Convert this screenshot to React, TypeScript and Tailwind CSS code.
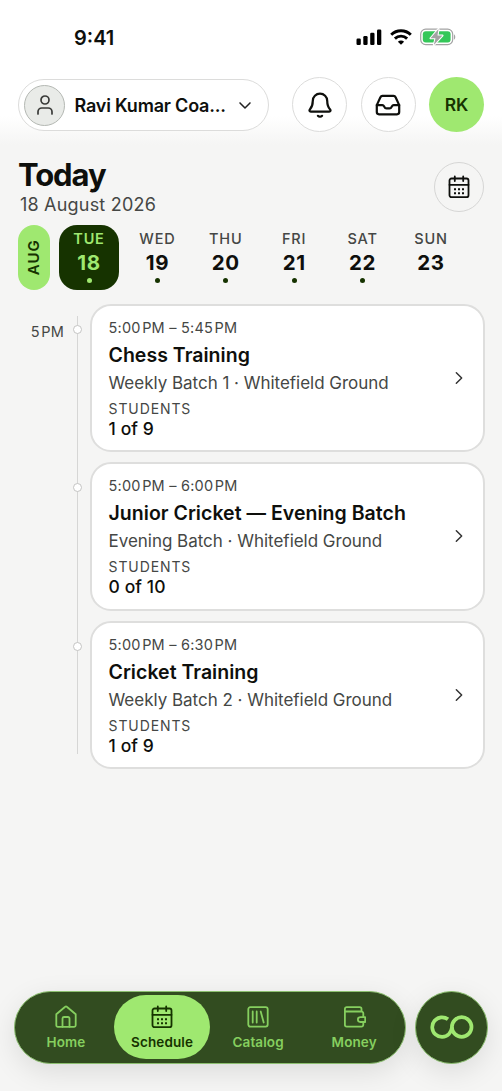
import type { ReactNode } from 'react'

const days = [
  { day: 'TUE', date: 18, dot: true, active: true },
  { day: 'WED', date: 19, dot: true },
  { day: 'THU', date: 20, dot: true },
  { day: 'FRI', date: 21, dot: true },
  { day: 'SAT', date: 22, dot: true },
  { day: 'SUN', date: 23, dot: false },
]

const sessions = [
  {
    time: '5:00\u200aPM – 5:45\u200aPM',
    title: 'Chess Training',
    place: 'Weekly Batch 1 · Whitefield Ground',
    students: '1 of 9',
  },
  {
    time: '5:00\u200aPM – 6:00\u200aPM',
    title: 'Junior Cricket — Evening Batch',
    place: 'Evening Batch · Whitefield Ground',
    students: '0 of 10',
  },
  {
    time: '5:00\u200aPM – 6:30\u200aPM',
    title: 'Cricket Training',
    place: 'Weekly Batch 2 · Whitefield Ground',
    students: '1 of 9',
  },
]

function Icon({ className, width = 1.8, children }: { className: string; width?: number; children: ReactNode }) {
  return (
    <svg
      className={className}
      viewBox="0 0 24 24"
      fill="none"
      stroke="currentColor"
      strokeWidth={width}
      strokeLinecap="round"
      strokeLinejoin="round"
    >
      {children}
    </svg>
  )
}

function CalendarIcon({ className, width }: { className: string; width?: number }) {
  return (
    <Icon className={className} width={width}>
      <rect x="2.5" y="3.5" width="19" height="18.7" rx="2" />
      <path d="M2.5 9.8h19M7.8 1.5v4.5M16.2 1.5v4.5" />
      <path
        d="M8 14.2h.01M12 14.2h.01M16 14.2h.01M8 18.2h.01M12 18.2h.01M16 18.2h.01"
        strokeWidth="2"
        strokeLinecap="square"
      />
    </Icon>
  )
}

function HomeIcon({ className }: { className: string }) {
  return (
    <Icon className={className}>
      <path d="M2.3 9.2 11.2 1.7a1.2 1.2 0 0 1 1.6 0L21.7 9.2V20.3a1.5 1.5 0 0 1-1.5 1.5H3.8a1.5 1.5 0 0 1-1.5-1.5z" />
      <path d="M8.5 21.8V13.5A1.5 1.5 0 0 1 10 12h4a1.5 1.5 0 0 1 1.5 1.5v8.3" />
    </Icon>
  )
}

function CatalogIcon({ className }: { className: string }) {
  return (
    <Icon className={className}>
      <rect x="2.3" y="2.2" width="19.4" height="19.4" rx="2" />
      <path d="M6.7 6.5v11M10.7 6.5v11M14.7 6.5l3 11" />
    </Icon>
  )
}

function WalletIcon({ className }: { className: string }) {
  return (
    <Icon className={className}>
      <path d="M19.5 6.5V4a1.8 1.8 0 0 0-1.8-1.8H4.7A1.8 1.8 0 0 0 2.9 4v15.8a1.8 1.8 0 0 0 1.8 1.8h14.8a1.8 1.8 0 0 0 1.8-1.8V17M21.3 12.2V8.3a1.8 1.8 0 0 0-1.8-1.8H2.9" />
      <path d="M23.2 12.2h-4.9a2.4 2.4 0 0 0 0 4.8h4.9z" />
    </Icon>
  )
}

const tabs = [
  { label: 'Home', icon: HomeIcon },
  { label: 'Schedule', icon: CalendarIcon, active: true },
  { label: 'Catalog', icon: CatalogIcon },
  { label: 'Money', icon: WalletIcon },
]

function StatusBar() {
  return (
    <div className="flex h-[74px] items-center justify-between pl-[74px] pr-[46px]">
      <span className="pt-px text-[20px] font-semibold">9:41</span>
      <div className="flex items-center gap-2">
        <svg className="h-4 w-[26px]" viewBox="0 0 26 16">
          <rect x="0.5" y="9.5" width="4.3" height="6.5" rx="1.2" />
          <rect x="7.3" y="7" width="4.3" height="9" rx="1.2" />
          <rect x="14.2" y="3.8" width="4.3" height="12.2" rx="1.2" />
          <rect x="21" y="0.5" width="4.3" height="15.5" rx="1.2" />
        </svg>
        <svg className="h-4 w-[22px]" viewBox="0 0 22 16" fill="none" stroke="#000" strokeWidth="2.9">
          <path d="M1.2 5.8a13.9 13.9 0 0 1 19.6 0" />
          <path d="M4.9 9.6a8.7 8.7 0 0 1 12.2 0" />
          <path d="M11 15.8 7.9 12.7a4.4 4.4 0 0 1 6.2 0z" fill="#000" stroke="none" />
        </svg>
        <svg className="h-[18px] w-9" viewBox="0 0 36 18">
          <rect x="0.7" y="1.2" width="32" height="15.4" rx="5" fill="#fff" stroke="#a3a3a3" strokeWidth="1.2" />
          <rect x="2.8" y="3.3" width="27.8" height="11.2" rx="3" fill="#34c759" />
          <path d="M34 6.5c1.7.6 1.7 4.4 0 5z" fill="#a3a3a3" />
          <path
            d="M18.5 1 10.5 10.3h5L13.8 17l8.7-9.5h-5z"
            fill="#a3a3a3"
            stroke="#fff"
            strokeWidth="2"
            paintOrder="stroke"
            strokeLinejoin="round"
          />
        </svg>
      </div>
    </div>
  )
}

function Header() {
  return (
    <header className="flex h-[62px] items-center px-[18px]">
      <button className="flex h-[52px] w-[251px] items-center rounded-full border border-[#dcdcdb] bg-white pl-[5px]">
        <span className="flex size-[41px] shrink-0 items-center justify-center rounded-full border border-[#b4b8b3] bg-[#e9ebe8]">
          <Icon className="size-6 text-[#3a3b39]" width={1.7}>
            <circle cx="12" cy="7" r="4" />
            <path d="M5 21v-2.2A3.8 3.8 0 0 1 8.8 15h6.4a3.8 3.8 0 0 1 3.8 3.8V21" />
          </Icon>
        </span>
        <span className="ml-[9.5px] whitespace-nowrap text-[18px] font-semibold tracking-[-0.2px]">Ravi Kumar Coa...</span>
        <Icon className="ml-auto mr-[13px] size-5 text-[#222]" width={1.8}>
          <path d="m6 9.5 6 6 6-6" />
        </Icon>
      </button>
      <div className="mb-px ml-auto flex gap-[13.5px]">
        <button className="flex size-[55px] items-center justify-center rounded-full border border-[#dcdcdb] bg-white">
          <Icon className="size-7" width={1.9}>
            <path d="M12 2.3a6.2 6.2 0 0 0-6.2 6.2c0 3.7-.6 5.3-2.5 7.3-.7.8-.3 1.9.8 1.9h15.8c1.1 0 1.5-1.1.8-1.9-1.9-2-2.5-3.6-2.5-7.3A6.2 6.2 0 0 0 12 2.3z" />
            <path d="M10.2 21.3c.9 1 2.7 1 3.6 0" />
          </Icon>
        </button>
        <button className="flex size-[55px] items-center justify-center rounded-full border border-[#dcdcdb] bg-white">
          <Icon className="size-7" width={1.9}>
            <path d="M2.4 12.1h4.8c1 0 1.2.6 1.7 1.5.4.9.9 1.3 1.8 1.3h2.6c.9 0 1.4-.4 1.8-1.3.5-.9.7-1.5 1.7-1.5h4.8" />
            <path d="M2.4 12.1v6a1.9 1.9 0 0 0 1.9 1.9h15.4a1.9 1.9 0 0 0 1.9-1.9v-6l-3.1-6.7A1.9 1.9 0 0 0 16.7 4.2H7.3a1.9 1.9 0 0 0-1.8 1.2z" />
          </Icon>
        </button>
        <div className="flex size-[55px] items-center justify-center rounded-full bg-[#9fe870] pt-px text-[17.5px] font-semibold text-[#163300]">
          RK
        </div>
      </div>
    </header>
  )
}

function DateStrip() {
  return (
    <div className="mr-[18px] flex h-[65px] shrink-0 overflow-hidden pl-[18px]">
      <div className="flex w-8 shrink-0 items-center justify-center rounded-full bg-[#9fe870]">
        <span className="-rotate-90 text-[15px] font-semibold tracking-[1px] text-[#163300]">AUG</span>
      </div>
      <div className="ml-[9px] flex gap-[8.4px]">
        {days.map((d) => (
          <div
            key={d.day}
            className={`flex w-[60px] shrink-0 flex-col items-center rounded-[18px] pt-1 ${
              d.active ? 'bg-[#163300] text-[#9fe870]' : ''
            }`}
          >
            <span
              className={`text-[14.5px] leading-[19px] tracking-[0.8px] ${
                d.active ? 'font-semibold' : 'font-medium text-[#454745]'
              }`}
            >
              {d.day}
            </span>
            <span className="mt-[2.5px] text-[20.5px] font-bold leading-[24px] tracking-[0.6px]">{d.date}</span>
            {d.dot && (
              <span className={`mt-[3.5px] size-[5px] rounded-full ${d.active ? 'bg-[#9fe870]' : 'bg-[#163300]'}`} />
            )}
          </div>
        ))}
      </div>
    </div>
  )
}

function Timeline() {
  return (
    <div className="relative mt-[14px] flex flex-col gap-[10px] pl-[18px] pr-[17px]">
      {/* Vertical rail behind the markers */}
      <div className="absolute left-[77px] top-3 h-[438px] w-px bg-[#d6d6d5]" />
      {sessions.map((s, i) => (
        <div key={s.title} className="flex h-[148.3px]">
          <span className="w-[46px] pt-[18px] text-right text-[14.5px] leading-[20px] tracking-[0.2px] text-[#454745]">
            {i === 0 && '5\u200aPM'}
          </span>
          <span className="relative ml-[9px] mt-[21.2px] size-[9px] rounded-full border border-[#c4c4c3] bg-white" />
          <div className="ml-[8px] flex flex-1 items-center justify-between rounded-[21px] border-2 border-[#dededd] bg-white px-[16.5px]">
            <div className="flex flex-col whitespace-nowrap pt-px text-[#454745]">
              <span className="text-[14.5px] leading-[20px] tracking-[0.21px]">{s.time}</span>
              <span className="mt-[4px] text-[19.5px] font-semibold leading-[26px] tracking-[0.03px] text-[#0e0f0c]">
                {s.title}
              </span>
              <span className="mt-[4px] text-[17px] leading-[22px] tracking-[-0.02px]">{s.place}</span>
              <span className="mt-[6px] text-[14px] leading-[18px] tracking-[0.9px]">STUDENTS</span>
              <span className="text-[17.5px] font-medium leading-[21px] tracking-[0.1px] text-[#0e0f0c]">{s.students}</span>
            </div>
            <Icon className="size-4 text-[#333]" width={2.2}>
              <path d="m8 4 8 8-8 8" />
            </Icon>
          </div>
        </div>
      ))}
    </div>
  )
}

function TabBar() {
  return (
    <nav className="mb-[27.5px] mt-auto flex h-[73px] gap-[9px] px-[14px]">
      <div className="flex w-[393px] rounded-full border border-[#8cbf70] bg-[#324c20] px-[3px] py-[3.5px] shadow-[0_8px_28px_rgba(0,0,0,0.1)]">
        {tabs.map((tab) => {
          const TabIcon = tab.icon
          return (
            <button
              key={tab.label}
              className={`flex flex-1 flex-col items-center rounded-full pt-[10px] ${
                tab.active ? 'bg-[#9fe870] text-[#163300]' : 'text-[#86cf5f]'
              }`}
            >
              <TabIcon className="size-6" />
              <span className="mt-1 text-[13.5px] font-semibold leading-[18px] tracking-[0.1px]">{tab.label}</span>
            </button>
          )
        })}
      </div>
      <button className="flex size-[73px] items-center justify-center rounded-full border border-[#8cbf70] bg-[#324c20] text-[#9fe870] shadow-[0_8px_28px_rgba(0,0,0,0.1)]">
        <svg className="h-6 w-11" viewBox="0 0 44 24" fill="none" stroke="currentColor" strokeWidth="3.7">
          <path d="M18 4.3A9.8 9.8 0 1 0 19 19C21 17 21.6 14.5 22.1 12" />
          <circle cx="31.7" cy="12" r="9.8" />
        </svg>
      </button>
    </nav>
  )
}

export default function App() {
  return (
    <div className="flex h-[1091px] w-full flex-col overflow-hidden bg-[#f5f5f4] font-[Inter,'Liberation_Sans',sans-serif] text-[#0e0f0c]">
      <div className="h-[145px] shrink-0 bg-linear-to-b from-white from-80% to-[#f5f5f4]">
        <StatusBar />
        <Header />
      </div>

      <div className="flex h-20 shrink-0 justify-between px-[18px]">
        <div className="pt-[11px]">
          <h1 className="text-[31px] font-bold leading-[37px] tracking-[-1.1px]">Today</h1>
          <p className="ml-[2px] text-[18px] leading-[24px] tracking-[0.2px] text-[#454745]">18 August 2026</p>
        </div>
        <button className="mt-[17px] flex size-[50px] items-center justify-center rounded-full border border-[#d6d6d5]">
          <CalendarIcon className="size-6" />
        </button>
      </div>

      <DateStrip />
      <Timeline />
      <TabBar />
    </div>
  )
}
